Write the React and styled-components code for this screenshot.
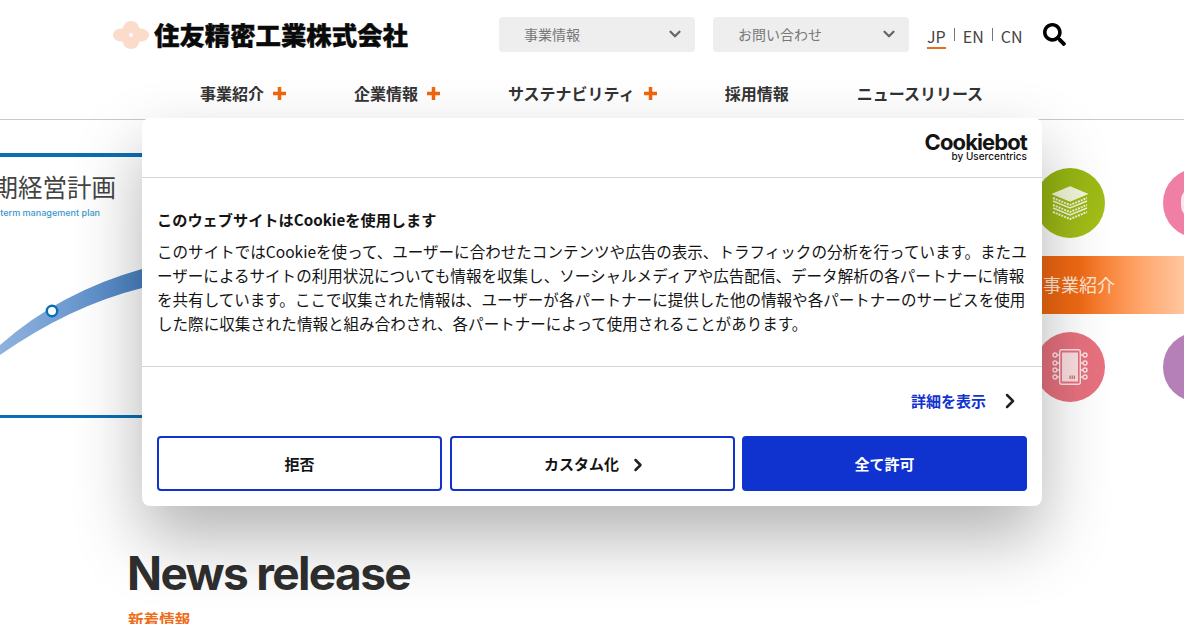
import React from "react";
import styled, { createGlobalStyle } from "styled-components";
import { ChevronDown, ChevronRight } from "lucide-react";
import { FaSearch } from "react-icons/fa";

const JP = `"Noto Sans CJK JP", "Noto Sans", sans-serif`;

const Global = createGlobalStyle`
  html, body { margin: 0; padding: 0; background: #fff; }
  body { font-family: ${JP}; overflow: hidden; }
  * { box-sizing: border-box; }
`;

const Page = styled.div`
  position: relative;
  width: 1184px;
  height: 624px;
  overflow: hidden;
  background: #fff;
`;

const Header = styled.header`
  height: 120px;
  border-bottom: 1px solid #c9c9c9;
`;
const TopBar = styled.div`
  display: flex;
  align-items: flex-start;
  height: 74px;
  padding: 17px 0 0 113px;
`;
const Logo = styled.div`
  display: flex;
  align-items: center;
  gap: 5px;
  width: 386px;
  height: 35px;
`;
const LogoName = styled.span`
  font-size: 25.4px;
  font-weight: 900;
  color: #0a0a0a;
  white-space: nowrap;
  line-height: 35px;
  -webkit-text-stroke: 0.4px #0a0a0a;
`;
const Select = styled.div`
  display: flex;
  align-items: center;
  justify-content: space-between;
  width: 196px;
  height: 35px;
  margin-right: 18px;
  padding: 0 11px 2px 25px;
  border-radius: 4px;
  background: #eeeeee;
  color: #777;
  font-size: 14px;
`;
const Langs = styled.div`
  display: flex;
  align-items: flex-start;
  height: 35px;
`;
const Lang = styled.span`
  display: block;
  height: 29px;
  margin-top: 3px;
  padding-top: 5px;
  font-size: 16px;
  line-height: 22px;
  color: #444;
  border-bottom: ${(p) => (p.$active ? "2px solid #e2711d" : "none")};
`;
const LangSep = styled.span`
  width: 1px;
  height: 13px;
  margin: 11px 8px 0;
  background: #777;
`;
const SearchBtn = styled.span`
  display: flex;
  margin: 6px 0 0 21px;
  color: #000;
`;
const Nav = styled.nav`
  display: flex;
  justify-content: center;
  gap: 68px;
  padding-right: 1px;
`;
const NavItem = styled.a`
  display: flex;
  align-items: center;
  gap: 9px;
  height: 38px;
  font-size: 16px;
  font-weight: 700;
  color: #333;
  white-space: nowrap;
`;

const Hero = styled.section`
  display: flex;
  justify-content: space-between;
  height: 420px;
`;
const PlanPanel = styled.div`
  width: 142px;
  height: 265px;
  margin-top: 33px;
  overflow: hidden;
  border-top: 4px solid #0a6eb4;
  border-bottom: 3px solid #0a6eb4;
`;
const PlanTitle = styled.div`
  display: flex;
  justify-content: flex-end;
  margin-top: 12px;
  padding-right: 26px;
  font-size: 24.5px;
  line-height: 36px;
  color: #444;
  white-space: nowrap;
`;
const PlanSub = styled.div`
  display: flex;
  justify-content: flex-end;
  padding-right: 42px;
  margin-top: 1px;
  font-family: Inter, sans-serif;
  font-size: 9.05px;
  font-weight: 500;
  line-height: 14px;
  color: #3a97cc;
  white-space: nowrap;
`;
const ArcSvg = styled.svg`
  display: block;
`;
const Business = styled.div`
  width: 149px;
  padding-top: 48px;
`;
const CircleRow = styled.div`
  display: flex;
  gap: 58px;
  width: 220px;
`;
const Circle = styled.div`
  flex: none;
  display: flex;
  align-items: center;
  justify-content: center;
  width: 70px;
  height: 70px;
  border-radius: 50%;
  background: ${(p) => p.$bg};
`;
const Band = styled.div`
  display: flex;
  align-items: center;
  height: 58px;
  margin: 18px 0;
  padding: 0 0 2px 8px;
  color: #ffe7d6;
  font-size: 18px;
  background: linear-gradient(90deg, #f0660f 0%, #f26b14 30%, #ffa46a 70%, #ffc79f 100%);
`;

const News = styled.section`
  padding: 0 0 0 127px;
`;
const NewsTitle = styled.h2`
  margin: 0;
  font-family: Inter, sans-serif;
  font-size: 46px;
  font-weight: 700;
  line-height: 66px;
  letter-spacing: -1.65px;
  color: #2f2f2f;
`;
const NewsSub = styled.div`
  margin: 2px 0 0 1px;
  font-size: 15.6px;
  font-weight: 700;
  color: #ef6c1a;
  line-height: 22px;
`;

const Dialog = styled.div`
  position: absolute;
  top: 118px;
  left: 142px;
  width: 900px;
  height: 388px;
  border-radius: 8px;
  background: #fff;
  box-shadow: 0 32px 68px rgba(0, 0, 0, 0.3);
`;
const DialogHead = styled.div`
  display: flex;
  justify-content: flex-end;
  align-items: flex-start;
  height: 60px;
  padding: 13px 15px 0;
  border-bottom: 1px solid #d6d6d6;
`;
const Brand = styled.div`
  display: flex;
  flex-direction: column;
  align-items: flex-end;
  color: #141414;
  font-family: Inter, sans-serif;
`;
const BrandName = styled.span`
  font-size: 22px;
  line-height: 22px;
  font-weight: 700;
  letter-spacing: -0.9px;
`;
const BrandBy = styled.span`
  font-size: 10px;
  line-height: 6px;
  font-weight: 500;
`;
const DialogBody = styled.div`
  height: 189px;
  padding: 29px 15px 0;
  border-bottom: 1px solid #d6d6d6;
`;
const DialogTitle = styled.h3`
  margin: 0 0 8px;
  font-size: 15.2px;
  line-height: 24px;
  font-weight: 700;
  color: #141414;
`;
const DialogText = styled.p`
  margin: 0;
  font-size: 15.55px;
  line-height: 24px;
  color: #141414;
`;
const DetailRow = styled.div`
  display: flex;
  justify-content: flex-end;
  align-items: center;
  gap: 12px;
  height: 69px;
  padding: 0 20px 2px 0;
  font-size: 15px;
  font-weight: 700;
  color: #1032cf;
`;
const Actions = styled.div`
  display: flex;
  gap: 7.5px;
  padding: 0 15px;
`;
const ActionBtn = styled.button`
  flex: 1;
  display: flex;
  align-items: center;
  justify-content: center;
  gap: 9px;
  height: 55px;
  padding: 0;
  border: 2px solid #1032cf;
  border-radius: 4px;
  background: ${(p) => (p.$primary ? "#1032cf" : "#fff")};
  color: ${(p) => (p.$primary ? "#fff" : "#141414")};
  font-family: ${JP};
  font-size: 15px;
  font-weight: 700;
`;
const BtnChevron = styled(ChevronRight)`
  margin: 3px -8px 0 0;
`;

const LogoMark = () => (
  <svg width="36" height="28" viewBox="0 0 36 28">
    <g fill="#fbdccb">
      <ellipse cx="18" cy="7" rx="8" ry="7" />
      <ellipse cx="18" cy="21" rx="8" ry="7" />
      <ellipse cx="8" cy="14" rx="8" ry="6.5" />
      <ellipse cx="28" cy="14" rx="8" ry="6.5" />
      <rect x="9" y="7" width="18" height="14" />
    </g>
    <circle cx="18" cy="14" r="2" fill="#fff" />
  </svg>
);

const PlusMark = () => (
  <svg width="13" height="13" viewBox="0 0 13 13" fill="#f0660f">
    <rect x="4.75" y="0" width="3.5" height="13" />
    <rect x="0" y="4.75" width="13" height="3.5" />
  </svg>
);

const StackIcon = () => (
  <svg width="36" height="34" viewBox="0 0 36 34" fill="none" stroke="#f2f5d8" strokeWidth="1.4">
    <path d="M18 1 L35 8 L18 15 L1 8 Z" fill="#f2f5d8" />
    <path d="M1 12 L18 19 L35 12" strokeDasharray="2 1" strokeWidth="2" />
    <path d="M1 15 L18 22 L35 15" />
    <path d="M1 19 L18 26 L35 19" strokeDasharray="2 1" strokeWidth="2" />
    <path d="M1 22 L18 29 L35 22" />
    <path d="M1 26 L18 33 L35 26" strokeDasharray="2 1" strokeWidth="2" />
  </svg>
);

const ChipIcon = () => (
  <svg width="36" height="36" viewBox="0 0 36 36" fill="none" stroke="#fbe3e4" strokeWidth="1.4">
    <rect x="7.7" y="0.7" width="20.6" height="34.6" rx="2" />
    <rect x="10" y="3.5" width="16" height="29" fill="#fbdfe1" stroke="none" />
    <path d="M5 6H8M5 14H8M5 21H8M5 28H8M28 6H31M28 14H31M28 21H31M28 28H31" />
    <circle cx="3" cy="6" r="2" />
    <circle cx="3" cy="14" r="2" />
    <circle cx="3" cy="21" r="2" />
    <circle cx="3" cy="28" r="2" />
    <circle cx="33" cy="6" r="2" />
    <circle cx="33" cy="14" r="2" />
    <circle cx="33" cy="21" r="2" />
    <circle cx="33" cy="28" r="2" />
    <path d="M18 26.5V30M20.2 26.5V30M22.4 26.5V30" stroke="#c9646e" strokeWidth="1.2" />
  </svg>
);

const PinkIcon = () => (
  <svg width="36" height="32" viewBox="0 0 36 32">
    <rect x="1" y="1" width="34" height="30" rx="12" fill="#fde6ee" />
  </svg>
);

const navItems = [
  ["事業紹介", true],
  ["企業情報", true],
  ["サステナビリティ", true],
  ["採用情報", false],
  ["ニュースリリース", false],
];

export default function App() {
  return (
    <Page>
      <Global />
      <Header>
        <TopBar>
          <Logo>
            <LogoMark />
            <LogoName>住友精密工業株式会社</LogoName>
          </Logo>
          <Select>
            事業情報
            <ChevronDown size={18} strokeWidth={3} color="#666" />
          </Select>
          <Select>
            お問い合わせ
            <ChevronDown size={18} strokeWidth={3} color="#666" />
          </Select>
          <Langs>
            <Lang $active>JP</Lang>
            <LangSep />
            <Lang>EN</Lang>
            <LangSep />
            <Lang>CN</Lang>
          </Langs>
          <SearchBtn>
            <FaSearch size={23} />
          </SearchBtn>
        </TopBar>
        <Nav>
          {navItems.map(([label, plus]) => (
            <NavItem key={label}>
              {label}
              {plus && <PlusMark />}
            </NavItem>
          ))}
        </Nav>
      </Header>
      <Hero>
        <PlanPanel>
          <PlanTitle>中期経営計画</PlanTitle>
          <PlanSub>Mid-term management plan</PlanSub>
          <ArcSvg width="142" height="190" viewBox="0 0 142 190">
            <defs>
              <linearGradient id="arc" x1="0" x2="1" y1="0" y2="0">
                <stop offset="0" stopColor="#8fb2de" />
                <stop offset="1" stopColor="#4a82c2" />
              </linearGradient>
            </defs>
            <path d="M0 125 Q60 72 142 49 L142 68 Q70 86 0 135 Z" fill="url(#arc)" />
            <circle cx="52" cy="91" r="5.2" fill="#fff" stroke="#0a6eb4" strokeWidth="2.4" />
          </ArcSvg>
        </PlanPanel>
        <Business>
          <CircleRow>
            <Circle $bg="linear-gradient(135deg, #8fb10f, #a8c11a)">
              <StackIcon />
            </Circle>
            <Circle $bg="#f07fa6">
              <PinkIcon />
            </Circle>
          </CircleRow>
          <Band>事業紹介</Band>
          <CircleRow>
            <Circle $bg="#e8717f">
              <ChipIcon />
            </Circle>
            <Circle $bg="#b57fb8" />
          </CircleRow>
        </Business>
      </Hero>
      <News>
        <NewsTitle>News release</NewsTitle>
        <NewsSub>新着情報</NewsSub>
      </News>
      <Dialog>
        <DialogHead>
          <Brand>
            <BrandName>Cookiebot</BrandName>
            <BrandBy>by Usercentrics</BrandBy>
          </Brand>
        </DialogHead>
        <DialogBody>
          <DialogTitle>このウェブサイトはCookieを使用します</DialogTitle>
          <DialogText>
            このサイトではCookieを使って、ユーザーに合わせたコンテンツや広告の表示、トラフィックの分析を行っています。またユーザーによるサイトの利用状況についても情報を収集し、ソーシャルメディアや広告配信、データ解析の各パートナーに情報を共有しています。ここで収集された情報は、ユーザーが各パートナーに提供した他の情報や各パートナーのサービスを使用した際に収集された情報と組み合わされ、各パートナーによって使用されることがあります。
          </DialogText>
        </DialogBody>
        <DetailRow>
          詳細を表示
          <ChevronRight size={24} strokeWidth={2.5} color="#222" />
        </DetailRow>
        <Actions>
          <ActionBtn>拒否</ActionBtn>
          <ActionBtn>
            カスタム化
            <BtnChevron size={20} strokeWidth={3} color="#222" />
          </ActionBtn>
          <ActionBtn $primary>全て許可</ActionBtn>
        </Actions>
      </Dialog>
    </Page>
  );
}
